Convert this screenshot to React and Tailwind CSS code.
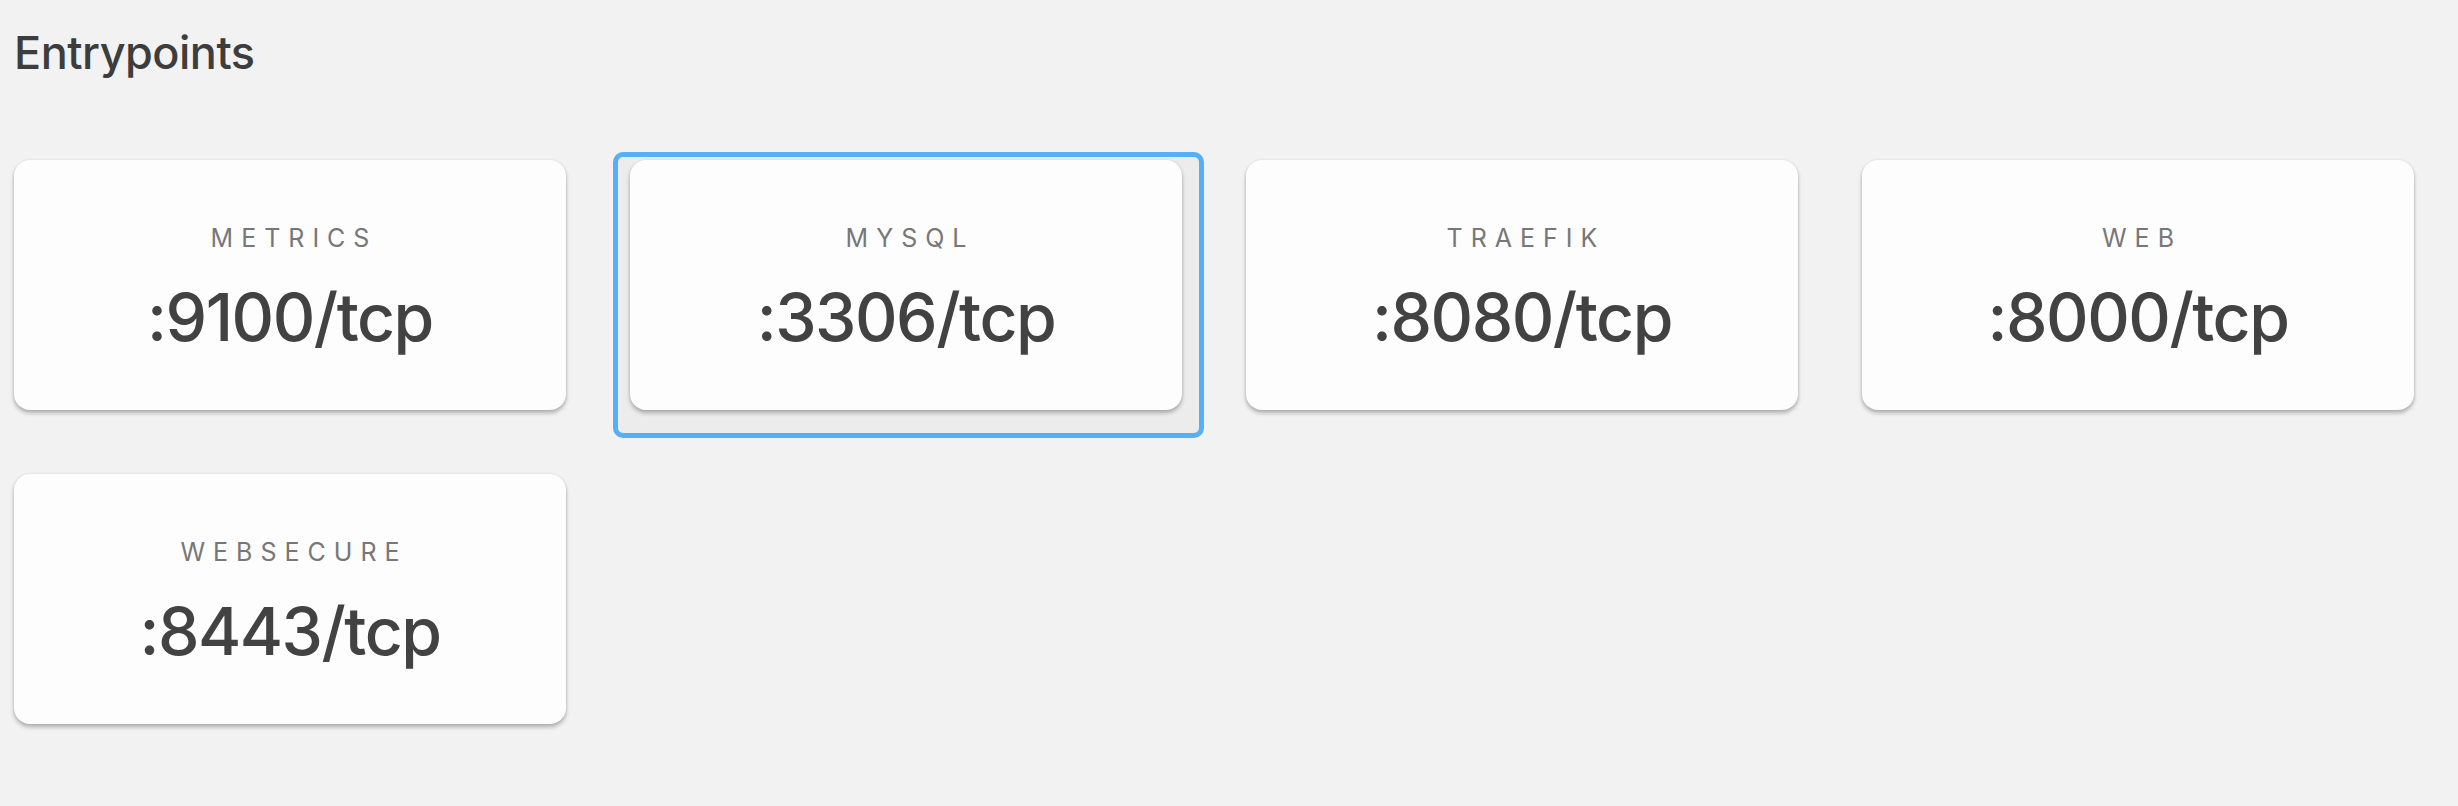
const ENTRYPOINTS = [
  { name: 'metrics', address: ':9100/tcp' },
  { name: 'mysql', address: ':3306/tcp', focused: true },
  { name: 'traefik', address: ':8080/tcp' },
  { name: 'web', address: ':8000/tcp' },
  { name: 'websecure', address: ':8443/tcp' },
]

function EntrypointCard({ name, address, focused }) {
  return (
    <div className="relative">
      {/* focus ring around the selected card */}
      {focused && (
        <span className="absolute -left-[17px] -top-[8px] -right-[22px] -bottom-[28px] rounded-[10px] border-[5px] border-[#55b0f5] bg-[#ececec]" />
      )}
      <div className="relative flex h-[250px] flex-col items-center rounded-[16px] bg-[#fdfdfd] pt-[65px] shadow-[0_3px_4px_rgba(0,0,0,0.28),0_0_3px_rgba(0,0,0,0.08)]">
        <div className="pl-[8px] text-[25px] leading-[26px] uppercase tracking-[8px] text-[#777777]">
          {name}
        </div>
        <div className="mt-[32px] text-[66px] leading-[68px] font-[450] tracking-[-1.5px] text-[#424242]">
          {address}
        </div>
      </div>
    </div>
  )
}

export default function App() {
  return (
    <div className="h-[806px] w-full overflow-hidden bg-[#f2f2f2] pl-[14px] pr-[44px] pt-[29px] font-['Inter','Roboto',sans-serif]">
      <h1 className="text-[45px] leading-[48px] font-medium tracking-[-0.5px] text-[#3d3d3d]">Entrypoints</h1>
      <div className="mt-[83px] grid grid-cols-4 gap-[64px]">
        {ENTRYPOINTS.map(ep => (
          <EntrypointCard key={ep.name} {...ep} />
        ))}
      </div>
    </div>
  )
}
